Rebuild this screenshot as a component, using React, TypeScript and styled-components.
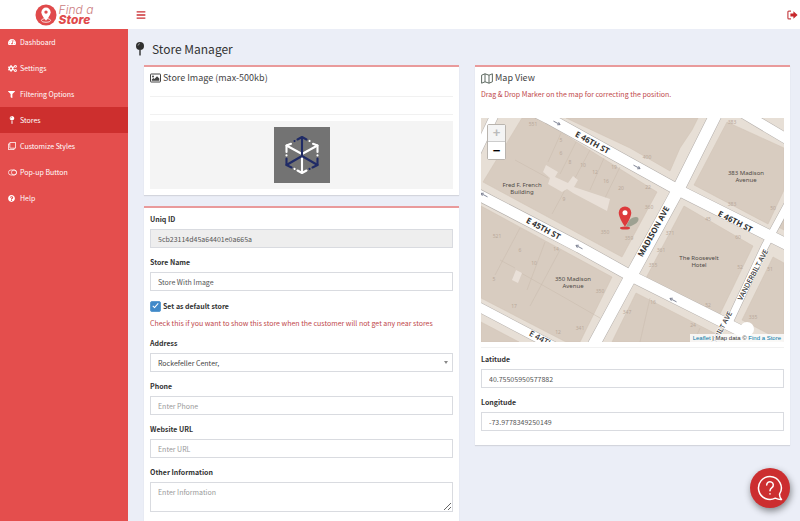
import React from "react";
import styled, { createGlobalStyle } from "styled-components";
import {
  FaBars,
  FaCogs,
  FaFilter,
  FaMapPin,
  FaQuestionCircle,
  FaRegClone,
  FaTachometerAlt,
} from "react-icons/fa";

const sans = `"Noto Sans CJK SC", "Noto Sans", sans-serif`;

const GlobalStyle = createGlobalStyle`
  *, *::before, *::after { box-sizing: border-box; }
  body {
    margin: 0;
    background: #ebeef7;
    font-family: ${sans};
    font-size: 7px;
    line-height: 12px;
    color: #333;
  }
  button, input, select, textarea { font: inherit; }
`;

const Page = styled.div`
  min-height: 100vh;
  display: grid;
  grid-template-columns: 128px minmax(0, 1fr);
  grid-template-rows: 29px 1fr;
`;

const Brand = styled.a`
  display: flex;
  align-items: center;
  justify-content: center;
  gap: 2px;
  background: #fff;
  color: #e04a4b;
  text-decoration: none;
`;

const BrandText = styled.span`
  display: flex;
  flex-direction: column;
  font-family: Inter, sans-serif;
  font-style: italic;
  font-size: 12px;
  line-height: 10px;
`;

const BrandTop = styled.span`
  font-weight: 300;
  color: #cc7d80;
`;

const BrandBottom = styled.span`
  font-weight: 800;
`;

const TopBar = styled.header`
  display: flex;
  align-items: center;
  justify-content: space-between;
  padding: 0 2px 0 8px;
  background: #fff;
`;

const IconButton = styled.button`
  display: flex;
  padding: 0;
  border: 0;
  background: none;
  color: #cc3034;
  font-size: 10px;
  cursor: pointer;
`;

const Sidebar = styled.nav`
  background: #e44e4d;
`;

const NavItem = styled.a<{ $active?: boolean }>`
  display: flex;
  align-items: center;
  gap: 3px;
  height: 26px;
  padding-left: 8px;
  background: ${(p) => (p.$active ? "#cd2f2e" : "transparent")};
  color: #fff;
  text-decoration: none;
`;

const NavIcon = styled.span<{ $size?: number }>`
  display: flex;
  width: 9px;
  font-size: ${(p) => p.$size ?? 8}px;
`;

const Content = styled.main`
  display: flex;
  flex-direction: column;
`;

const PageTitle = styled.h1`
  display: flex;
  align-items: center;
  gap: 8px;
  height: 36px;
  margin: 0;
  padding: 3px 0 0 8px;
  font-size: 12px;
  line-height: 18px;
  font-weight: 400;
`;

const Columns = styled.div`
  flex: 1;
  display: grid;
  grid-template-columns: repeat(2, minmax(0, 1fr));
  gap: 16px;
  padding: 0 10px 0 16px;
`;

const Column = styled.div`
  display: flex;
  flex-direction: column;
  gap: 11px;
`;

const Panel = styled.section<{ $fill?: boolean }>`
  flex: ${(p) => (p.$fill ? 1 : "none")};
  padding: 5px 6px 6px;
  border-top: 2px solid #e99a9b;
  background: #fff;
  box-shadow: 0 1px 1px rgba(0, 0, 0, 0.1);
`;

const PanelTitle = styled.h2`
  display: flex;
  align-items: center;
  gap: 2px;
  margin: 0;
  font-size: 9px;
  line-height: 12px;
  font-weight: 400;
  color: #444;
`;

const Rule = styled.hr<{ $top: number; $bottom: number }>`
  height: 1px;
  margin: ${(p) => p.$top}px 0 ${(p) => p.$bottom}px;
  border: 0;
  background: #f1f1f1;
`;

const Preview = styled.div`
  display: flex;
  justify-content: center;
  padding: 6px;
  background: #f4f4f4;
`;

const Note = styled.p<{ $bottom: number }>`
  margin: 4px 0 ${(p) => p.$bottom}px;
  color: #c0474a;
`;

const Field = styled.div`
  display: flex;
  flex-direction: column;
  gap: 4px;
  margin-bottom: 8px;
`;

const Label = styled.label`
  font-weight: 700;
`;

const Input = styled.input`
  width: 100%;
  height: 19px;
  padding: 0 7px;
  border: 1px solid #d9dbe0;
  border-radius: 0;
  background: #fff;
  color: #555;
  &::placeholder { color: #999; }
  &:read-only { background: #eee; }
`;

const SelectWrap = styled.div`
  display: grid;
  align-items: center;
  &::after {
    content: "";
    grid-area: 1 / 1;
    justify-self: end;
    margin-right: 5px;
    border: 2px solid transparent;
    border-top: 3px solid #888;
    border-bottom: 0;
    pointer-events: none;
  }
`;

const Select = styled.select`
  grid-area: 1 / 1;
  appearance: none;
  width: 100%;
  height: 19px;
  padding: 0 7px;
  border: 1px solid #d9dbe0;
  border-radius: 0;
  background: #fff;
  color: #444;
`;

const TextArea = styled.textarea`
  width: 100%;
  height: 30px;
  padding: 3px 7px;
  border: 1px solid #d9dbe0;
  background: #fff;
  color: #555;
  resize: vertical;
  &::placeholder { color: #999; }
`;

const CheckRow = styled.label`
  display: flex;
  align-items: center;
  gap: 2px;
  height: 14px;
  font-weight: 700;
`;

const CheckBox = styled.input`
  appearance: none;
  display: grid;
  place-items: center;
  width: 11px;
  height: 11px;
  margin: 0;
  border: 1px solid #5c9bd0;
  border-radius: 2px;
  background: #fff;
  &:checked { background: #4089c9; }
  &:checked::after {
    content: "";
    width: 3px;
    height: 6px;
    margin-bottom: 2px;
    border: solid #fff;
    border-width: 0 1px 1px 0;
    transform: rotate(42deg);
  }
`;

const MapFrame = styled.div`
  position: relative;
  height: 224px;
  overflow: hidden;
  background: #e7dfd6;
`;

const MapDrawing = styled.svg`
  display: block;
  width: 100%;
  height: 100%;
`;

const ZoomControl = styled.div`
  position: absolute;
  top: 6px;
  left: 6px;
  display: grid;
  width: 19px;
  border: 1px solid #b9b4ae;
  border-radius: 2px;
  background: #fff;
`;

const ZoomButton = styled.button`
  height: 17px;
  padding: 0;
  border: 0;
  border-bottom: 1px solid #ccc;
  background: #fff;
  color: #000;
  font: 700 13px/16px "Liberation Sans", sans-serif;
  &:last-child { border-bottom: 0; }
  &:disabled { background: #f4f4f4; color: #bbb; }
`;

const Attribution = styled.div`
  position: absolute;
  right: 0;
  bottom: 0;
  padding: 0 3px;
  background: rgba(255, 255, 255, 0.8);
  font: 6px/8px "Liberation Sans", sans-serif;
  color: #333;
  a { color: #0078a8; text-decoration: none; }
`;

const HelpButton = styled.button`
  position: fixed;
  right: 10px;
  bottom: 13px;
  display: grid;
  place-items: center;
  width: 40px;
  height: 40px;
  padding: 0;
  border: 0;
  border-radius: 50%;
  background: #cc2e30;
  box-shadow: 1px 3px 7px rgba(0, 0, 0, 0.45);
`;

const LogoMark = () => (
  <svg width="22" height="22" viewBox="0 0 22 22" aria-hidden="true">
    <circle cx="11" cy="11" r="10.5" fill="#e04a4b" />
    <ellipse cx="11" cy="16.4" rx="4.6" ry="1.9" fill="none" stroke="#fff" strokeWidth="0.8" />
    <path d="M11 3.6a4.6 4.6 0 0 0-4.6 4.6c0 3.300 4.600 8.400 4.600 8.400s4.600-5.100 4.600-8.400A4.600 4.600 0 0 0 11 3.600z" fill="#fff" />
    <circle cx="11" cy="8.100" r="1.700" fill="#e04a4b" />
  </svg>
);

const BallPin = () => (
  <svg width="8" height="14" viewBox="0 0 8 14" aria-hidden="true">
    <circle cx="4" cy="4" r="4" fill="#2f2f2f" />
    <path d="M2 3.600A2.200 2.200 0 0 1 4 1.600" stroke="#aaa" strokeWidth="0.800" fill="none" />
    <path d="M3.300 8h1.400v5L4 14l-.7-1z" fill="#2f2f2f" />
  </svg>
);

const PictureIcon = () => (
  <svg width="11" height="10" viewBox="0 0 11 10" aria-hidden="true">
    <rect x="0.500" y="1" width="10" height="8" rx="0.600" fill="none" stroke="#444" />
    <circle cx="3" cy="3.500" r="1" fill="#444" />
    <path d="M1.800 7.800V6.500l1.600-1.600 1 1L7 3.300l2.300 2.300v2.200z" fill="#444" />
  </svg>
);

const FoldedMapIcon = () => (
  <svg width="12" height="11" viewBox="0 0 12 11" fill="none" stroke="#4d5a50" strokeWidth="0.900" strokeLinejoin="round" aria-hidden="true">
    <path d="M.6 2.200 4 .8l4 1.400L11.400.8v8L8 10.200 4 8.800.6 10.200zM4 .8v8M8 2.200v8" />
  </svg>
);

const ToggleIcon = () => (
  <svg width="10" height="7" viewBox="0 0 10 7" fill="none" stroke="#fff" strokeWidth="0.800" aria-hidden="true">
    <rect x="0.500" y="0.700" width="9" height="5.600" rx="2.800" />
    <circle cx="6.700" cy="3.500" r="2.800" />
  </svg>
);

const SignOutIcon = () => (
  <svg width="11" height="10" viewBox="0 0 11 10" aria-hidden="true">
    <path d="M4 1.200H1.800a.9.9 0 0 0-.9.900v5.800a.9.9 0 0 0 .9.900H4" fill="none" stroke="#c8474b" strokeWidth="1.200" />
    <path d="M3.400 3.500h3V1.200L10.600 5 6.400 8.800V6.500h-3z" fill="#c8272c" />
  </svg>
);

const CubeImage = () => (
  <svg width="56" height="56" viewBox="0 0 56 56" role="img" aria-label="Store image">
    <rect width="56" height="56" fill="#737373" />
    <g fill="none" strokeWidth="2.100" strokeLinecap="round" strokeLinejoin="round">
      <g stroke="#fff">
        <path d="M28 27 12.500 18.500M28 27l15.500-8.500" />
        <path d="M17 16.800 12.500 18.500V25M39 16.800l4.500 1.700V25" />
        <path d="M28 30v16M23.500 43.500 28 46l4.500-2.500" />
        <path d="M12.500 28.300v.1M43.500 28.300v.1M20.500 41.800l.1.100M35.500 14l.1-.1" />
      </g>
      <g stroke="#202b66">
        <path d="M28 28V10M23.500 12.500 28 10l4.500 2.500" />
        <path d="M28 29 12.500 38M28 29l15.500 9" />
        <path d="M12.500 31.500V38l5 2.500M43.500 31.500V38l-5 2.500" />
        <path d="M20.500 14.100l.1-.1M35.500 41.800l.1.100" />
      </g>
    </g>
  </svg>
);

const ChatIcon = () => (
  <svg width="26" height="26" viewBox="0 0 26 26" fill="none" stroke="#fff" strokeWidth="1.500" strokeLinecap="round" strokeLinejoin="round" aria-hidden="true">
    <path d="M13 1.500a11.500 11.500 0 1 0 5.300 21.700c2 1 4 1.500 6.200 1.300-1.400-1.500-2-3.500-2-5.300A11.500 11.500 0 0 0 13 1.500z" />
    <path d="M9.700 10a3.300 3.300 0 1 1 5.200 2.700c-1.200.9-1.900 1.500-1.900 3.100M13 18.700v.2" />
  </svg>
);

const blocks = [
  "566,118 698,118 692,130 680,148 670,171 630,148",
  "727,122 784,148 784,190 768,224 694,185",
  "522,118 538,118 657,192 622,257 483,182",
  "481,206 612,277 580,342 566,342 481,298",
  "684,206 753,246 720,314 646,278",
  "773,257 784,263 784,342 742,320",
  "636,293 720,336 723,342 612,342",
  "481,322 519,342 481,342",
  "776,226 784,208 784,230",
];

const lightShapes = [
  "546,165 558,172 555,177 568,183 573,176 578,180 574,187 610,199 607,211 573,193 567,189 562,192 548,184 550,178 543,172",
  "516,270 522,273 518,283 512,280",
];

const roads = [
  { d: "M536 112 548 118 678 190 790 246", w: 11 },
  { d: "M475 193 579 247 631 276 745 333", w: 11 },
  { d: "M475 305 555 347", w: 9 },
  { d: "M717 112 678 190 631 276 592 348", w: 12 },
  { d: "M790 200 765 246 727 327", w: 7 },
  { d: "M738 110 790 141", w: 10 },
  { d: "M497 110 477 152", w: 8 },
];

const plotLines =
  "M561 133 548 162M576 142 560 174M590 150 574 180M604 158 590 190M620 167 604 200M565 190 552 214M515 160 548 178M520 228 495 275M545 242 527 290M560 250 530 306M521 273 560 295 600 318M500 260 515 268M650 298 640 342M700 328 694 342";

const numbers: [number, number, string][] = [
  [533, 126, "551"], [561, 142, "5"], [561, 155, "6"], [570, 164, "8"],
  [583, 167, "10"], [595, 174, "12"], [606, 183, "16"], [621, 190, "20"],
  [614, 169, "19"], [564, 201, "9"], [497, 238, "521"], [520, 252, "6"],
  [534, 265, "10"], [556, 251, "14"], [605, 234, "350"], [629, 240, "359"],
  [600, 293, "350"], [580, 330, "341"], [558, 334, "12"], [514, 308, "17"],
  [494, 281, "5"], [732, 124, "383"], [732, 206, "383"], [773, 210, "50"],
  [708, 221, "45"], [670, 235, "371"], [661, 252, "361"], [653, 267, "355"],
  [708, 307, "52"], [740, 269, "52"], [647, 159, "400"], [648, 189, "22"],
  [649, 209, "360"], [627, 314, "347"], [653, 304, "16"], [693, 327, "24"],
  [738, 239, "60"], [770, 271, "51"], [753, 319, "335"],
];

const streets: { x: number; y: number; turn: number; size: number; name: string; weight?: number }[] = [
  { x: 591, y: 145, turn: 29, size: 8, name: "E 46TH ST" },
  { x: 734, y: 224, turn: 27, size: 8, name: "E 46TH ST" },
  { x: 542, y: 231, turn: 28, size: 8, name: "E 45TH ST" },
  { x: 545, y: 344, turn: 28, size: 8, name: "E 44TH ST", weight: 500 },
  { x: 656, y: 233, turn: -61, size: 8, name: "MADISON AVE" },
  { x: 755, y: 276, turn: -62, size: 7, name: "VANDERBILT AVE", weight: 500 },
  { x: 719, y: 338, turn: -62, size: 7, name: "VANDERBILT AVE", weight: 500 },
];

const places: { x: number; y: number; lines: [string, string] }[] = [
  { x: 522, y: 187, lines: ["Fred F. French", "Building"] },
  { x: 746, y: 175, lines: ["383 Madison", "Avenue"] },
  { x: 573, y: 281, lines: ["350 Madison", "Avenue"] },
  { x: 699, y: 260, lines: ["The Roosevelt", "Hotel"] },
];

const arrows = [
  { x: 557, y: 123, turn: 28 },
  { x: 637, y: 167, turn: 28 },
  { x: 579, y: 247, turn: 208 },
  { x: 673, y: 300, turn: 208 },
  { x: 484, y: 195, turn: 208 },
];

const StreetMap = () => (
  <MapDrawing viewBox="481 118 303 224" preserveAspectRatio="xMidYMid slice" role="img" aria-label="Street map">
    <rect x="481" y="118" width="303" height="224" fill="#e7dfd6" />
    {blocks.map((b) => <polygon key={b} points={b} fill="#d8ccc0" stroke="#d0c3b5" strokeWidth="0.500" />)}
    <path d={plotLines} stroke="#c9bbad" strokeWidth="0.500" fill="none" />
    {lightShapes.map((b) => <polygon key={b} points={b} fill="#e9e0d8" />)}
    {roads.map((r) => <path key={r.d} d={r.d} fill="none" stroke="#b3aeaa" strokeWidth={r.w + 1} />)}
    {roads.map((r) => <path key={r.d} d={r.d} fill="none" stroke="#fff" strokeWidth={r.w} />)}
    <circle cx="747" cy="329" r="7" fill="#fff" />
    {arrows.map((a) => (
      <path key={a.x} transform={`translate(${a.x} ${a.y}) rotate(${a.turn})`} d="M-4 0h7M1-1.500 3.500 0 1 1.500" stroke="#71778a" strokeWidth="0.800" fill="none" />
    ))}
    <g fontFamily="Noto Sans, sans-serif" textAnchor="middle">
      <g fontSize="5" fill="#b9a99b">
        {numbers.map(([x, y, n]) => <text key={`${x}-${y}`} x={x} y={y}>{n}</text>)}
      </g>
      <g fill="#333" stroke="#fff" strokeWidth="1" paintOrder="stroke">
        {streets.map((s) => (
          <text key={`${s.x}-${s.y}`} transform={`translate(${s.x} ${s.y}) rotate(${s.turn})`} fontSize={s.size} fontWeight={s.weight ?? 700}>{s.name}</text>
        ))}
      </g>
      <g fontSize="6" fill="#4e4945">
        {places.map((p) => (
          <text key={p.x} x={p.x} y={p.y}>
            {p.lines[0]}
            <tspan x={p.x} dy="7">{p.lines[1]}</tspan>
          </text>
        ))}
      </g>
    </g>
    <path d="M626 227c2-6 5-10 10-10 4 0 3 5-1 7-3 2-6 3-9 3z" fill="#6f7d6c" opacity="0.550" />
    <ellipse cx="625" cy="228" rx="5" ry="1.500" fill="#d93a3c" />
    <path d="M625 206.500a6.300 6.300 0 0 0-6.300 6.300c0 5 6.300 14 6.300 14s6.300-9 6.300-14a6.300 6.300 0 0 0-6.300-6.300z" fill="#dd3a3c" />
    <circle cx="625" cy="212.800" r="2.500" fill="#fff" />
  </MapDrawing>
);

const navItems = [
  { name: "Dashboard", icon: <FaTachometerAlt /> },
  { name: "Settings", icon: <FaCogs />, size: 9 },
  { name: "Filtering Options", icon: <FaFilter />, size: 7 },
  { name: "Stores", icon: <FaMapPin />, size: 8, active: true },
  { name: "Customize Styles", icon: <FaRegClone /> },
  { name: "Pop-up Button", icon: <ToggleIcon /> },
  { name: "Help", icon: <FaQuestionCircle />, size: 7 },
];

export default function App() {
  return (
    <>
      <GlobalStyle />
      <Page>
        <Brand href="#">
          <LogoMark />
          <BrandText>
            <BrandTop>Find a</BrandTop>
            <BrandBottom>Store</BrandBottom>
          </BrandText>
        </Brand>
        <TopBar>
          <IconButton aria-label="Toggle menu"><FaBars /></IconButton>
          <IconButton aria-label="Sign out"><SignOutIcon /></IconButton>
        </TopBar>
        <Sidebar>
          {navItems.map((n) => (
            <NavItem key={n.name} href="#" $active={n.active}>
              <NavIcon $size={n.size}>{n.icon}</NavIcon>
              {n.name}
            </NavItem>
          ))}
        </Sidebar>
        <Content>
          <PageTitle><BallPin />Store Manager</PageTitle>
          <Columns>
            <Column>
              <Panel>
                <PanelTitle><PictureIcon />Store Image (max-500kb)</PanelTitle>
                <Rule $top={12} $bottom={17} />
                <Rule $top={0} $bottom={6} />
                <Preview><CubeImage /></Preview>
              </Panel>
              <Panel $fill>
                <Field>
                  <Label htmlFor="uid">Uniq ID</Label>
                  <Input id="uid" readOnly defaultValue="5cb23114d45a64401e0a665a" />
                </Field>
                <Field>
                  <Label htmlFor="name">Store Name</Label>
                  <Input id="name" defaultValue="Store With Image" />
                </Field>
                <CheckRow>
                  <CheckBox type="checkbox" defaultChecked />
                  Set as default store
                </CheckRow>
                <Note $bottom={8}>Check this if you want to show this store when the customer will not get any near stores</Note>
                <Field>
                  <Label htmlFor="address">Address</Label>
                  <SelectWrap>
                    <Select id="address"><option>Rockefeller Center,</option></Select>
                  </SelectWrap>
                </Field>
                <Field>
                  <Label htmlFor="phone">Phone</Label>
                  <Input id="phone" placeholder="Enter Phone" />
                </Field>
                <Field>
                  <Label htmlFor="url">Website URL</Label>
                  <Input id="url" placeholder="Enter URL" />
                </Field>
                <Field>
                  <Label htmlFor="info">Other Information</Label>
                  <TextArea id="info" placeholder="Enter Information" />
                </Field>
              </Panel>
            </Column>
            <Column>
              <Panel>
                <PanelTitle><FoldedMapIcon />Map View</PanelTitle>
                <Note $bottom={18}>Drag &amp; Drop Marker on the map for correcting the position.</Note>
                <MapFrame>
                  <StreetMap />
                  <ZoomControl>
                    <ZoomButton aria-label="Zoom in" disabled>+</ZoomButton>
                    <ZoomButton aria-label="Zoom out">−</ZoomButton>
                  </ZoomControl>
                  <Attribution>
                    <a href="#">Leaflet</a> | Map data © <a href="#">Find a Store</a>
                  </Attribution>
                </MapFrame>
                <Rule $top={5} $bottom={5} />
                <Field>
                  <Label htmlFor="lat">Latitude</Label>
                  <Input id="lat" defaultValue="40.75505950577882" />
                </Field>
                <Field>
                  <Label htmlFor="lng">Longitude</Label>
                  <Input id="lng" defaultValue="-73.9778349250149" />
                </Field>
              </Panel>
            </Column>
          </Columns>
        </Content>
      </Page>
      <HelpButton aria-label="Help"><ChatIcon /></HelpButton>
    </>
  );
}
